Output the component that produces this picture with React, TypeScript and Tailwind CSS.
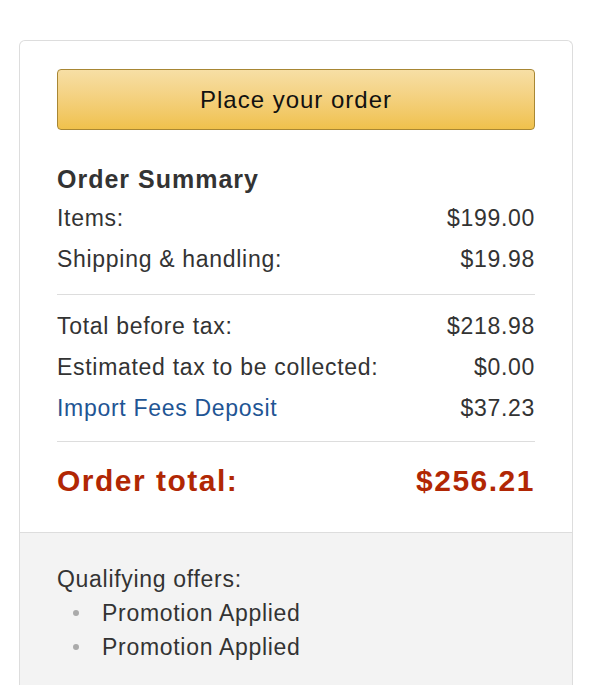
const rows1 = [
  { label: "Items:", value: "$199.00" },
  { label: "Shipping & handling:", value: "$19.98" },
];

const rows2 = [
  { label: "Total before tax:", value: "$218.98" },
  { label: "Estimated tax to be collected:", value: "$0.00" },
  { label: "Import Fees Deposit", value: "$37.23", link: true },
];

function Row({ label, value, link }: { label: string; value: string; link?: boolean }) {
  return (
    <div className="flex h-[41px] items-center justify-between">
      <span className={link ? "text-[#1f5594]" : ""}>{label}</span>
      <span>{value}</span>
    </div>
  );
}

export default function App() {
  return (
    <div
      className="min-h-[685px] bg-white pt-[40px] pl-[19px] text-[23px] tracking-[0.7px] text-[#333]"
      style={{ fontFamily: '"Liberation Sans", Arial, sans-serif' }}
    >
      <div className="w-[554px] rounded-t-[6px] border border-b-0 border-[#ddd] h-[645px] flex flex-col overflow-hidden">
        <div className="px-[37px] pt-[28px]">
          <button className="flex h-[61px] w-full items-center justify-center rounded-[4px] border border-[#a88734] bg-gradient-to-b from-[#f7dfa5] to-[#f0c14b] text-[24px] tracking-[1px] text-[#111]">
            Place your order
          </button>

          <div className="mt-[31px] flex h-[37px] items-center text-[25px] font-bold tracking-[1px]">
            Order Summary
          </div>
          {rows1.map((r) => (
            <Row key={r.label} {...r} />
          ))}

          <div className="mt-[14px] h-px bg-[#ddd]" />

          <div className="mt-[11px]">
            {rows2.map((r) => (
              <Row key={r.label} {...r} />
            ))}
          </div>

          <div className="mt-[12px] h-px bg-[#ddd]" />

          <div className="flex h-[76px] items-center justify-between text-[30px] font-bold tracking-[1.5px] text-[#b12704]">
            <span>Order total:</span>
            <span>$256.21</span>
          </div>
          <div className="h-[14px]" />
        </div>

        <div className="flex-1 border-t border-[#ddd] bg-[#f3f3f3] px-[37px] pt-[29px] leading-[34px]">
          <div>Qualifying offers:</div>
          {["Promotion Applied", "Promotion Applied"].map((p, i) => (
            <div key={i} className="flex items-center">
              <span className="ml-[16px] h-[6px] w-[6px] rounded-full bg-[#aaa]" />
              <span className="ml-[23px]">{p}</span>
            </div>
          ))}
        </div>
      </div>
    </div>
  );
}
